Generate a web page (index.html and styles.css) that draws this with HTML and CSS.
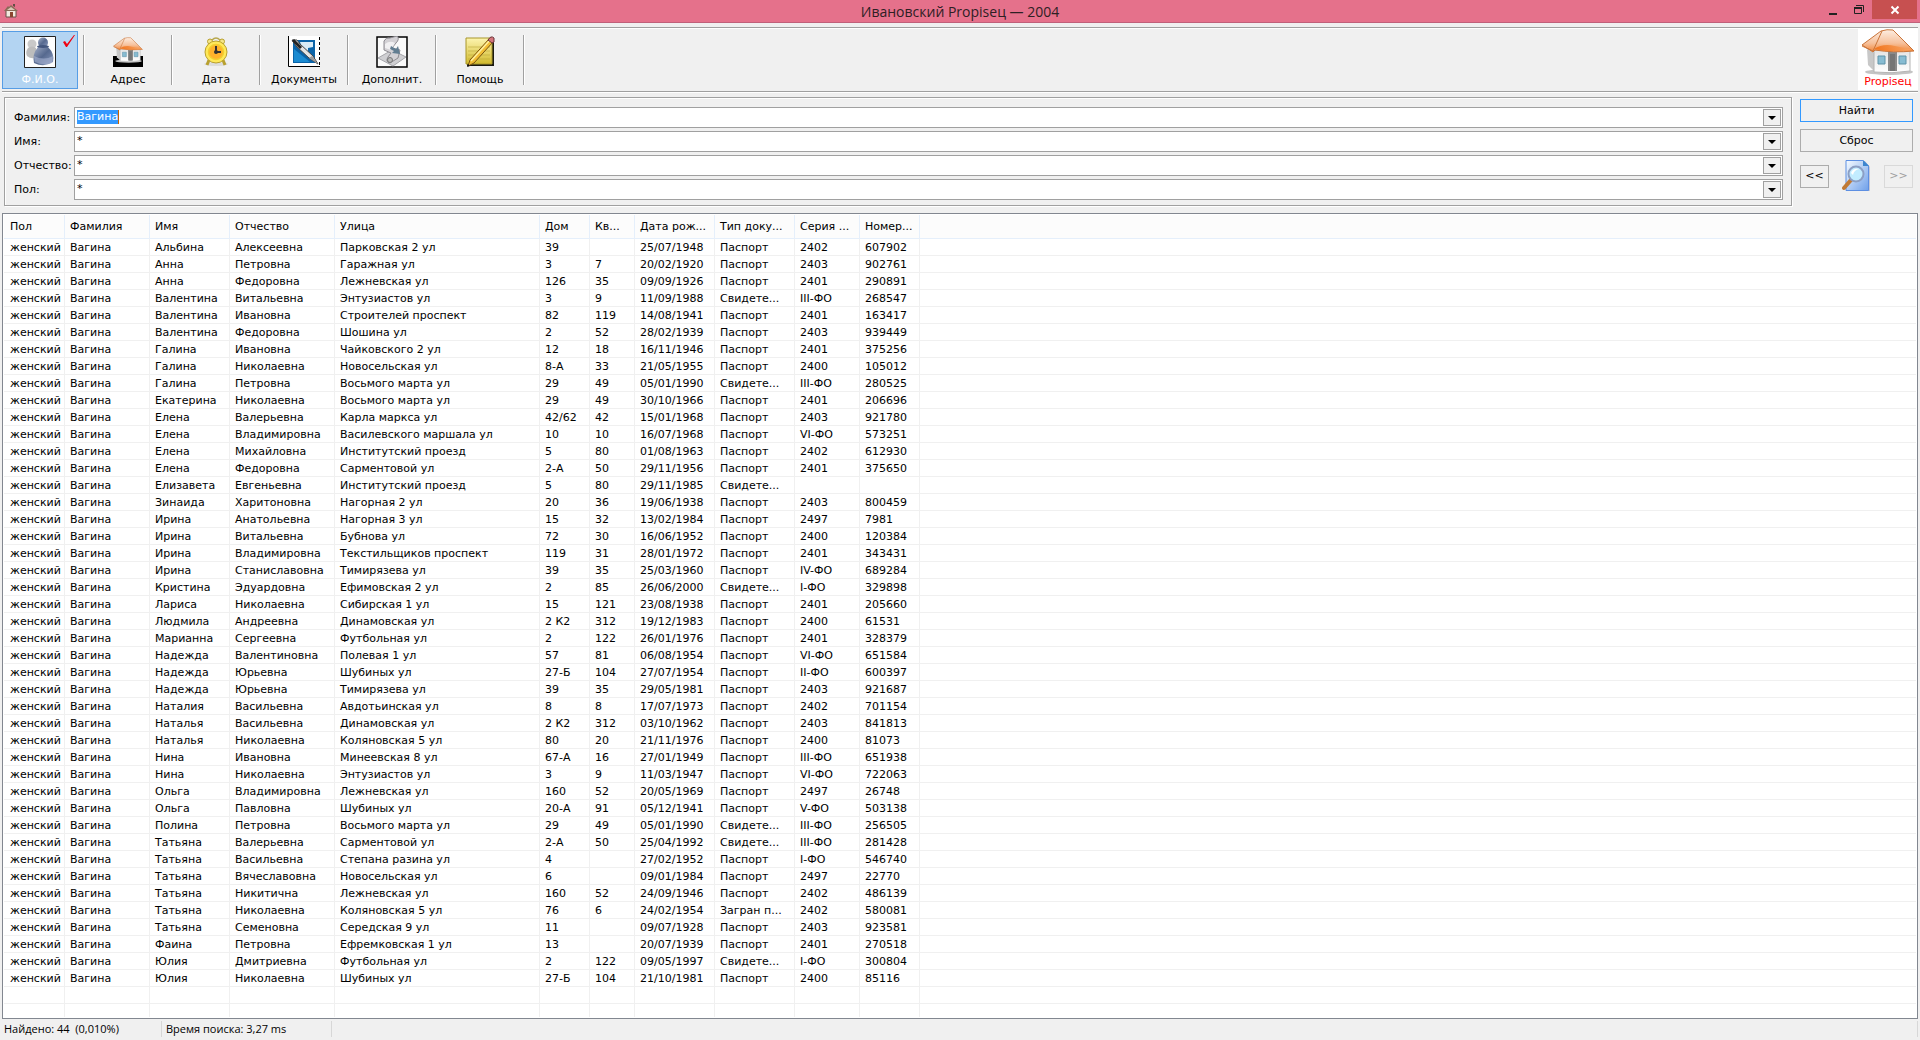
FILE: index.html
```html
<!DOCTYPE html>
<html lang="ru">
<head>
<meta charset="utf-8">
<title>Ивановский Propiseц — 2004</title>
<link rel="stylesheet" href="styles.css">
</head>
<body>
<svg class="defs" width="0" height="0" aria-hidden="true">
  <defs>
    <linearGradient id="roof" x1="0" y1="0" x2="0" y2="1"><stop offset="0" stop-color="#fdeee2"/><stop offset=".6" stop-color="#f6c19c"/><stop offset="1" stop-color="#f28536"/></linearGradient>
    <linearGradient id="eave" x1="0" y1="0" x2="1" y2="0"><stop offset="0" stop-color="#f06c10"/><stop offset="1" stop-color="#f9a868"/></linearGradient>
    <linearGradient id="body" x1="0" y1="0" x2="1" y2="1"><stop offset="0" stop-color="#a9b4cc"/><stop offset=".5" stop-color="#56698f"/><stop offset="1" stop-color="#8c9cc0"/></linearGradient>
    <linearGradient id="wall" x1="0" y1="0" x2="0" y2="1"><stop offset="0" stop-color="#e4e4e4"/><stop offset="1" stop-color="#ffffff"/></linearGradient>
    <linearGradient id="note" x1="0" y1="0" x2="0" y2="1"><stop offset="0" stop-color="#fdf5b0"/><stop offset="1" stop-color="#d2ba2c"/></linearGradient>
    <linearGradient id="sheet" x1="0" y1="0" x2="1" y2="1"><stop offset="0" stop-color="#f6fbff"/><stop offset="1" stop-color="#6fa0ea"/></linearGradient>
    <symbol id="house" viewBox="0 0 54 46">
      <ellipse cx="28" cy="43" rx="24" ry="3" fill="#c4c4c4"/>
      <path d="M6 20 14 24V43L7 36Z" fill="#c8c8c8"/>
      <path d="M13 21H49V42Q31 45 13 43Z" fill="url(#wall)" stroke="#b4b4b4"/>
      <path d="M27 23H36V42H27Z" fill="#8a8a8a"/><path d="M29 25H34V42H29Z" fill="#757575"/>
      <path d="M17 27H24V35H17ZM38 27H45V35H38Z" fill="#87bcd2" stroke="#5f93a9"/>
      <path d="M1 16 20 2Q26 0 32 1L53 22Q32 24 14 21L12 23Z" fill="url(#roof)" stroke="#c9743a"/>
      <path d="M13 20Q22 14 34 17 44 19 51 21 32 24 13 20Z" fill="url(#eave)" opacity=".85"/>
      <path d="M1 17 12 22 21 2" fill="none" stroke="#c9743a"/>
    </symbol>
  </defs>
</svg>

<header class="titlebar">
  <svg class="titlebar__icon" viewBox="0 0 14 14" aria-hidden="true"><path d="M2 6H12V13H2Z" fill="#f3e9df" stroke="#665048"/><path d="M0 7 4 2 5 3 7 1 14 7Z" fill="#8a6b58"/><path d="M3 6 7 3 11 6" fill="#d9c7b5"/><path d="M6 8H9V13H6Z" fill="#8a4630"/><path d="M9 0H11V3L9 2Z" fill="#634e45"/></svg>
  <h1 class="titlebar__text">Ивановский Propiseц — 2004</h1>
  <div class="titlebar__controls">
    <button class="winbtn" type="button" aria-label="Свернуть"><svg width="10" height="12" viewBox="0 0 10 12"><path d="M1 9H9V11H1Z" fill="#222"/></svg></button>
    <button class="winbtn" type="button" aria-label="Восстановить"><svg width="10" height="12" viewBox="0 0 10 12"><path d="M2 1.500V1.500H9.500V8" fill="none" stroke="#222"/><path d="M.5 3.500H7.500V9.500H.5Z" fill="none" stroke="#222"/><path d="M0 3H8V5H0Z" fill="#222"/></svg></button>
    <button class="winbtn winbtn--close" type="button" aria-label="Закрыть"><svg width="10" height="10" viewBox="0 0 10 10"><path d="M1.500 1.500 8.500 8.500M8.500 1.500 1.500 8.500" stroke="#fff" stroke-width="2"/></svg></button>
  </div>
</header>

<nav class="toolbar">
  <button class="tool tool--active" type="button">
    <svg class="tool__icon" viewBox="0 0 32 32"><path d="M.5 .5H31.500V31.500H.5Z" fill="#fdfdfd" stroke="#222"/><circle cx="8" cy="8" r="4.500" fill="#c9c9c9"/><path d="M4 12Q8 9 12 12L13 21Q8 24 3 20 1 16 4 12Z" fill="#bdbdbd"/><circle cx="19" cy="6.500" r="5" fill="url(#body)"/><path d="M14 11Q19 8 24 11 31 18 29 26 20 32 10 27 8 18 14 11Z" fill="url(#body)"/><path d="M10 20Q20 25 29 20L28 27Q19 30 11 26Z" fill="#a6b3d2" opacity=".6"/><ellipse cx="19" cy="10.500" rx="6" ry="1.500" fill="#43567e"/></svg>
    <span>Ф.И.О.</span>
    <svg class="tool__check" viewBox="0 0 14 12"><path d="M1 7 3 6 5 9 12 0 13 0 5 12 4 12Z" fill="#f00010"/></svg>
  </button>
  <span class="toolbar__sep"></span>
  <button class="tool" type="button">
    <svg class="tool__icon" viewBox="0 0 32 32"><path d="M1 20H31V31H1Z" fill="#000"/><use href="#house" x="1" y="0" width="30" height="28"/></svg>
    <span>Адрес</span>
  </button>
  <span class="toolbar__sep"></span>
  <button class="tool" type="button">
    <svg class="tool__icon" viewBox="0 0 32 32"><ellipse cx="16" cy="28" rx="12" ry="2" fill="#ddd"/><path d="M12 4Q16 0 20 4" fill="none" stroke="#b8a850" stroke-width="1.500"/><circle cx="10" cy="5.500" r="2.500" fill="#f5e688" stroke="#b8a030"/><circle cx="22" cy="5.500" r="2.500" fill="#f5e688" stroke="#b8a030"/><path d="M9 24 7 29M23 24 25 29" stroke="#b8a030" stroke-width="3"/><circle cx="16" cy="16" r="11" fill="#ffe95a" stroke="#b8a030"/><circle cx="16" cy="16" r="7.500" fill="#ffb22c" stroke="#f2cf30" stroke-width="1.500"/><path d="M16 10V16H21" fill="none" stroke="#333" stroke-width="2"/><circle cx="16" cy="16" r="2" fill="#333"/></svg>
    <span>Дата</span>
  </button>
  <span class="toolbar__sep"></span>
  <button class="tool" type="button">
    <svg class="tool__icon" viewBox="0 0 32 32"><path d="M0 0H32V31H0Z" fill="#fff"/><path d="M.5 0V30.500H32" fill="none" stroke="#000"/><path d="M31.500 1V30" stroke="#000" stroke-dasharray="3 2"/><path d="M5 4H27V27H5Z" fill="#0a63a8"/><path d="M12 6H25V11L20 12V16L14 12Z" fill="#d8ebf6"/><path d="M6 13 22 26H6Z" fill="#1c8bd1"/><path d="M4 4H9L12 8 25 20 30 28 21 22 8 10Z" fill="#e4e4e4" stroke="#444"/><path d="M5 4 13 12" stroke="#222" stroke-width="3"/><path d="M24 20 30 28 21 22Z" fill="#999"/></svg>
    <span>Документы</span>
  </button>
  <span class="toolbar__sep"></span>
  <button class="tool" type="button">
    <svg class="tool__icon" viewBox="0 0 32 32"><path d="M1 1H31V31H1Z" fill="#fafafa" stroke="#000" stroke-width="1.500"/><path d="M2 22 16 14 30 21 17 30Z" fill="#cfcfd2" stroke="#a5a5aa"/><path d="M8 5Q10 1 14 2L21 0Q24 3 20 7L16 12 24 14 22 22 14 27Q9 26 12 21L15 17 8 14Z" fill="#d3d1d5" stroke="#8e8c92"/><path d="M9 8Q14 4 19 7L15 14 9 12Z" fill="#f1f0f2"/><path d="M15 10 20 13 22 10 24 18 16 17 18 15 14 13Z" fill="#627d91"/><circle cx="14" cy="24" r="2.500" fill="#bbb" stroke="#777"/></svg>
    <span>Дополнит.</span>
  </button>
  <span class="toolbar__sep"></span>
  <button class="tool" type="button">
    <svg class="tool__icon" viewBox="0 0 32 32"><path d="M3 2H30V30H3Z" fill="#1b1a10"/><path d="M2 2H28V28H2Z" fill="url(#note)" stroke="#a8962a"/><path d="M4 11H26M4 15H26M4 19H26M4 23H26" stroke="#bda938" opacity=".6"/><path d="M4 30 6 24 25 3 29 6 10 27Z" fill="#f1bd35" stroke="#7a5410"/><path d="M7 25 26 4" stroke="#fff0a0" stroke-width="1.500"/><path d="M24 4Q27-1 30 2L30 6 28 7Z" fill="#d3757c" stroke="#6b3238"/><path d="M3 31 4 28 6 30Z" fill="#111"/></svg>
    <span>Помощь</span>
  </button>
  <span class="toolbar__sep"></span>
  <div class="brand">
    <svg class="brand__icon" viewBox="0 0 54 46" aria-hidden="true"><use href="#house" width="54" height="46"/></svg>
    <span>Propiseц</span>
  </div>
</nav>

<form class="search" onsubmit="return false">
  <div class="fields">
    <label class="fields__label" for="surname">Фамилия:</label>
    <div class="combo"><input class="combo__input combo__input--selected" id="surname" value="Вагина"><button class="combo__drop" type="button" aria-label="Список фамилий"></button></div>
    <label class="fields__label" for="name">Имя:</label>
    <div class="combo"><input class="combo__input" id="name" value="*"><button class="combo__drop" type="button" aria-label="Список имён"></button></div>
    <label class="fields__label" for="patronymic">Отчество:</label>
    <div class="combo"><input class="combo__input" id="patronymic" value="*"><button class="combo__drop" type="button" aria-label="Список отчеств"></button></div>
    <label class="fields__label" for="sex">Пол:</label>
    <div class="combo"><input class="combo__input" id="sex" value="*"><button class="combo__drop" type="button" aria-label="Список значений пола"></button></div>
  </div>
  <div class="actions">
    <button class="btn btn--default" type="submit">Найти</button>
    <button class="btn" type="reset">Сброс</button>
    <div class="pager">
      <button class="btn btn--small" type="button">&lt;&lt;</button>
      <svg class="pager__icon" viewBox="0 0 30 32" aria-hidden="true"><path d="M5 1H23L28 7V31H5Z" fill="#c6c9d6"/><path d="M4 .5H21L26.500 6V30.500H4Z" fill="url(#sheet)" stroke="#5d8fe2"/><path d="M21 0V6H27Z" fill="#3d86cf"/><path d="M9 20 2 28" stroke="#c07a35" stroke-width="4" stroke-linecap="round"/><circle cx="14" cy="14" r="7.500" fill="#c2ecff" stroke="#8c9fc4" stroke-width="2"/><path d="M9 13Q11 8 17 9 12 10 11 15Z" fill="#fff"/></svg>
      <button class="btn btn--small" type="button" disabled>&gt;&gt;</button>
    </div>
  </div>
</form>

<main class="results">
<table class="grid">
<colgroup><col class="c-sex"><col class="c-surname"><col class="c-name"><col class="c-patronymic"><col class="c-street"><col class="c-house"><col class="c-flat"><col class="c-date"><col class="c-doc"><col class="c-series"><col class="c-number"><col></colgroup>
<thead><tr><th>Пол<th>Фамилия<th>Имя<th>Отчество<th>Улица<th>Дом<th>Кв...<th>Дата рож...<th>Тип доку...<th>Серия ...<th>Номер...<td></tr></thead>
<tbody>
<tr><td>женский<td>Вагина<td>Альбина<td>Алексеевна<td>Парковская 2 ул<td>39<td><td>25/07/1948<td>Паспорт<td>2402<td>607902<td>
<tr><td>женский<td>Вагина<td>Анна<td>Петровна<td>Гаражная ул<td>3<td>7<td>20/02/1920<td>Паспорт<td>2403<td>902761<td>
<tr><td>женский<td>Вагина<td>Анна<td>Федоровна<td>Лежневская ул<td>126<td>35<td>09/09/1926<td>Паспорт<td>2401<td>290891<td>
<tr><td>женский<td>Вагина<td>Валентина<td>Витальевна<td>Энтузиастов ул<td>3<td>9<td>11/09/1988<td>Свидете...<td>III-ФО<td>268547<td>
<tr><td>женский<td>Вагина<td>Валентина<td>Ивановна<td>Строителей проспект<td>82<td>119<td>14/08/1941<td>Паспорт<td>2401<td>163417<td>
<tr><td>женский<td>Вагина<td>Валентина<td>Федоровна<td>Шошина ул<td>2<td>52<td>28/02/1939<td>Паспорт<td>2403<td>939449<td>
<tr><td>женский<td>Вагина<td>Галина<td>Ивановна<td>Чайковского 2 ул<td>12<td>18<td>16/11/1946<td>Паспорт<td>2401<td>375256<td>
<tr><td>женский<td>Вагина<td>Галина<td>Николаевна<td>Новосельская ул<td>8-А<td>33<td>21/05/1955<td>Паспорт<td>2400<td>105012<td>
<tr><td>женский<td>Вагина<td>Галина<td>Петровна<td>Восьмого марта ул<td>29<td>49<td>05/01/1990<td>Свидете...<td>III-ФО<td>280525<td>
<tr><td>женский<td>Вагина<td>Екатерина<td>Николаевна<td>Восьмого марта ул<td>29<td>49<td>30/10/1966<td>Паспорт<td>2401<td>206696<td>
<tr><td>женский<td>Вагина<td>Елена<td>Валерьевна<td>Карла маркса ул<td>42/62<td>42<td>15/01/1968<td>Паспорт<td>2403<td>921780<td>
<tr><td>женский<td>Вагина<td>Елена<td>Владимировна<td>Василевского маршала ул<td>10<td>10<td>16/07/1968<td>Паспорт<td>VI-ФО<td>573251<td>
<tr><td>женский<td>Вагина<td>Елена<td>Михайловна<td>Институтский проезд<td>5<td>80<td>01/08/1963<td>Паспорт<td>2402<td>612930<td>
<tr><td>женский<td>Вагина<td>Елена<td>Федоровна<td>Сарментовой ул<td>2-А<td>50<td>29/11/1956<td>Паспорт<td>2401<td>375650<td>
<tr><td>женский<td>Вагина<td>Елизавета<td>Евгеньевна<td>Институтский проезд<td>5<td>80<td>29/11/1985<td>Свидете...<td><td><td>
<tr><td>женский<td>Вагина<td>Зинаида<td>Харитоновна<td>Нагорная 2 ул<td>20<td>36<td>19/06/1938<td>Паспорт<td>2403<td>800459<td>
<tr><td>женский<td>Вагина<td>Ирина<td>Анатольевна<td>Нагорная 3 ул<td>15<td>32<td>13/02/1984<td>Паспорт<td>2497<td>7981<td>
<tr><td>женский<td>Вагина<td>Ирина<td>Витальевна<td>Бубнова ул<td>72<td>30<td>16/06/1952<td>Паспорт<td>2400<td>120384<td>
<tr><td>женский<td>Вагина<td>Ирина<td>Владимировна<td>Текстильщиков проспект<td>119<td>31<td>28/01/1972<td>Паспорт<td>2401<td>343431<td>
<tr><td>женский<td>Вагина<td>Ирина<td>Станиславовна<td>Тимирязева ул<td>39<td>35<td>25/03/1960<td>Паспорт<td>IV-ФО<td>689284<td>
<tr><td>женский<td>Вагина<td>Кристина<td>Эдуардовна<td>Ефимовская 2 ул<td>2<td>85<td>26/06/2000<td>Свидете...<td>I-ФО<td>329898<td>
<tr><td>женский<td>Вагина<td>Лариса<td>Николаевна<td>Сибирская 1 ул<td>15<td>121<td>23/08/1938<td>Паспорт<td>2401<td>205660<td>
<tr><td>женский<td>Вагина<td>Людмила<td>Андреевна<td>Динамовская ул<td>2 К2<td>312<td>19/12/1983<td>Паспорт<td>2400<td>61531<td>
<tr><td>женский<td>Вагина<td>Марианна<td>Сергеевна<td>Футбольная ул<td>2<td>122<td>26/01/1976<td>Паспорт<td>2401<td>328379<td>
<tr><td>женский<td>Вагина<td>Надежда<td>Валентиновна<td>Полевая 1 ул<td>57<td>81<td>06/08/1954<td>Паспорт<td>VI-ФО<td>651584<td>
<tr><td>женский<td>Вагина<td>Надежда<td>Юрьевна<td>Шубиных ул<td>27-Б<td>104<td>27/07/1954<td>Паспорт<td>II-ФО<td>600397<td>
<tr><td>женский<td>Вагина<td>Надежда<td>Юрьевна<td>Тимирязева ул<td>39<td>35<td>29/05/1981<td>Паспорт<td>2403<td>921687<td>
<tr><td>женский<td>Вагина<td>Наталия<td>Васильевна<td>Авдотьинская ул<td>8<td>8<td>17/07/1973<td>Паспорт<td>2402<td>701154<td>
<tr><td>женский<td>Вагина<td>Наталья<td>Васильевна<td>Динамовская ул<td>2 К2<td>312<td>03/10/1962<td>Паспорт<td>2403<td>841813<td>
<tr><td>женский<td>Вагина<td>Наталья<td>Николаевна<td>Коляновская 5 ул<td>80<td>20<td>21/11/1976<td>Паспорт<td>2400<td>81073<td>
<tr><td>женский<td>Вагина<td>Нина<td>Ивановна<td>Минеевская 8 ул<td>67-А<td>16<td>27/01/1949<td>Паспорт<td>III-ФО<td>651938<td>
<tr><td>женский<td>Вагина<td>Нина<td>Николаевна<td>Энтузиастов ул<td>3<td>9<td>11/03/1947<td>Паспорт<td>VI-ФО<td>722063<td>
<tr><td>женский<td>Вагина<td>Ольга<td>Владимировна<td>Лежневская ул<td>160<td>52<td>20/05/1969<td>Паспорт<td>2497<td>26748<td>
<tr><td>женский<td>Вагина<td>Ольга<td>Павловна<td>Шубиных ул<td>20-А<td>91<td>05/12/1941<td>Паспорт<td>V-ФО<td>503138<td>
<tr><td>женский<td>Вагина<td>Полина<td>Петровна<td>Восьмого марта ул<td>29<td>49<td>05/01/1990<td>Свидете...<td>III-ФО<td>256505<td>
<tr><td>женский<td>Вагина<td>Татьяна<td>Валерьевна<td>Сарментовой ул<td>2-А<td>50<td>25/04/1992<td>Свидете...<td>III-ФО<td>281428<td>
<tr><td>женский<td>Вагина<td>Татьяна<td>Васильевна<td>Степана разина ул<td>4<td><td>27/02/1952<td>Паспорт<td>I-ФО<td>546740<td>
<tr><td>женский<td>Вагина<td>Татьяна<td>Вячеславовна<td>Новосельская ул<td>6<td><td>09/01/1984<td>Паспорт<td>2497<td>22770<td>
<tr><td>женский<td>Вагина<td>Татьяна<td>Никитична<td>Лежневская ул<td>160<td>52<td>24/09/1946<td>Паспорт<td>2402<td>486139<td>
<tr><td>женский<td>Вагина<td>Татьяна<td>Николаевна<td>Коляновская 5 ул<td>76<td>6<td>24/02/1954<td>Загран п...<td>2402<td>580081<td>
<tr><td>женский<td>Вагина<td>Татьяна<td>Семеновна<td>Середская 9 ул<td>11<td><td>09/07/1928<td>Паспорт<td>2403<td>923581<td>
<tr><td>женский<td>Вагина<td>Фаина<td>Петровна<td>Ефремковская 1 ул<td>13<td><td>20/07/1939<td>Паспорт<td>2401<td>270518<td>
<tr><td>женский<td>Вагина<td>Юлия<td>Дмитриевна<td>Футбольная ул<td>2<td>122<td>09/05/1997<td>Свидете...<td>I-ФО<td>300804<td>
<tr><td>женский<td>Вагина<td>Юлия<td>Николаевна<td>Шубиных ул<td>27-Б<td>104<td>21/10/1981<td>Паспорт<td>2400<td>85116<td>
<tr><td><td><td><td><td><td><td><td><td><td><td><td>
<tr class="grid__rest"><td><td><td><td><td><td><td><td><td><td><td><td>
</tbody>
</table>
</main>

<footer class="status">
  <span class="status__cell status__cell--found">Найдено: 44&nbsp; (0,010%)</span>
  <span class="status__cell status__cell--time">Время поиска: 3,27 ms</span>
  <span class="status__cell status__cell--rest"></span>
</footer>
</body>
</html>
```
FILE: styles.css
```css
* { box-sizing: border-box; }

body {
  margin: 0;
  min-height: 100vh;
  display: flex;
  flex-direction: column;
  background: #f0f0f0;
  color: #000;
  font: 11px/14px "DejaVu Sans", Verdana, sans-serif;
}

button, input { font: inherit; color: inherit; margin: 0; padding: 0; }

.defs { position: absolute; }

/* Title bar */
.titlebar {
  display: grid;
  grid-template-columns: 1fr auto 1fr;
  align-items: start;
  height: 23px;
  background: #e5718b;
  border-bottom: 1px solid #c0607a;
}
.titlebar__icon { width: 14px; height: 14px; margin: 4px 0 0 4px; }
.titlebar__text {
  margin: 0;
  font: 400 14px/23px "Open Sans", "Noto Sans", sans-serif;
  color: #2e2024;
}
.titlebar__controls { display: flex; justify-content: flex-end; padding-right: 3px; }
.winbtn {
  display: flex;
  align-items: center;
  justify-content: center;
  width: 26px;
  height: 19px;
  border: 0;
  background: none;
}
.winbtn--close { width: 45px; background: #c75050; }

/* Toolbar */
.toolbar {
  display: flex;
  gap: 5px;
  margin: 4px 2px 0;
  height: 66px;
  border-top: 1px solid #a0a0a0;
  border-bottom: 1px solid #fff;
  box-shadow: inset 0 1px #fff, inset 0 -1px #a0a0a0;
}
.tool {
  position: relative;
  display: flex;
  flex-direction: column;
  align-items: center;
  width: 76px;
  height: 58px;
  margin-top: 3px;
  padding-top: 4px;
  gap: 5px;
  border: 1px solid transparent;
  background: none;
  white-space: nowrap;
}
.tool--active { background: #b3d4f2; border-color: #569de5; color: #fff; }
.tool__icon { width: 32px; height: 32px; flex: none; }
.tool__check { position: absolute; top: 3px; right: 1px; width: 14px; height: 12px; }
.toolbar__sep {
  width: 2px;
  height: 50px;
  margin-top: 7px;
  border-left: 1px solid #a0a0a0;
  border-right: 1px solid #fff;
}
.brand {
  display: flex;
  flex-direction: column;
  align-items: center;
  width: 60px;
  height: 61px;
  margin: 1px 0 0 auto;
  background: #fff;
  color: #f00;
}
.brand__icon { width: 54px; height: 46px; }

/* Search form */
.search { display: flex; gap: 8px; margin: 4px 7px 0 4px; }
.fields {
  flex: 1;
  display: grid;
  grid-template-columns: 69px 1fr;
  row-gap: 3px;
  padding: 9px 8px 5px 0;
  border: 1px solid #a0a0a0;
  box-shadow: inset 1px 1px #fff, 1px 1px #fff;
}
.fields__label { padding-left: 9px; line-height: 21px; white-space: nowrap; }
.combo {
  display: flex;
  height: 21px;
  padding: 1px;
  background: #fff;
  border: 1px solid #a0a0a0;
}
.combo__input {
  flex: 1;
  min-width: 0;
  height: 14px;
  margin: 1px;
  border: 0;
  background: none;
  outline: 0;
}
.combo__input--selected {
  flex: none;
  width: 42px;
  margin-right: auto;
  background: #3399ff;
  color: #fff;
  border-right: 1px solid #c86400;
}
.combo__drop {
  display: flex;
  align-items: center;
  justify-content: center;
  width: 18px;
  height: 17px;
  border: 1px solid #a0a0a0;
  background: #f0f0f0;
}
.combo__drop::before {
  content: "";
  border: 4px solid transparent;
  border-top-color: #000;
  border-bottom: 0;
}

.actions { width: 113px; padding-top: 2px; display: flex; flex-direction: column; gap: 7px; }
.btn {
  height: 23px;
  border: 1px solid #acacac;
  background: #f0f0f0;
}
.btn--default { border-color: #3399ff; }
.btn--small { width: 29px; }
.btn:disabled { color: #a0a0a0; border-color: #d9d9d9; }
.pager { display: flex; justify-content: space-between; align-items: center; padding-top: 1px; }
.pager__icon { width: 30px; height: 32px; }

/* Results */
.results {
  flex: 1 0 auto;
  display: flex;
  margin: 7px 2px 0;
  padding: 1px;
  background: #fff;
  border: 1px solid #828790;
}
.grid {
  width: 100%;
  table-layout: fixed;
  border-collapse: separate;
  border-spacing: 0;
}
.grid th, .grid td {
  height: 17px;
  padding: 1px 0 0 5px;
  border-right: 1px solid #f0f0f0;
  border-bottom: 1px solid #f0f0f0;
  text-align: left;
  font-weight: 400;
  white-space: nowrap;
  overflow: hidden;
  line-height: 15px;
}
.grid thead th, .grid thead td {
  height: 24px;
  padding-top: 0;
  background: #fcfcfc;
  border-color: #e5effb;
}
.grid tr > :first-child { padding-left: 6px; }
.grid tr > :last-child { border-right: 0; }
.grid .grid__rest td { height: auto; border-bottom: 0; }
.c-sex { width: 61px; }
.c-surname { width: 85px; }
.c-name { width: 80px; }
.c-patronymic { width: 105px; }
.c-street { width: 205px; }
.c-house { width: 50px; }
.c-flat { width: 45px; }
.c-date, .c-doc { width: 80px; }
.c-series { width: 65px; }
.c-number { width: 60px; }

/* Status bar */
.status {
  display: flex;
  height: 21px;
  padding: 2px 2px 3px 0;
  font: 11px/16px "Open Sans", "Noto Sans", sans-serif;
}
.status__cell { padding-left: 4px; border-right: 1px solid #d7d7d7; white-space: nowrap; }
.status__cell--found { width: 162px; }
.status__cell--time { width: 170px; }
.status__cell--rest { flex: 1; }
```
